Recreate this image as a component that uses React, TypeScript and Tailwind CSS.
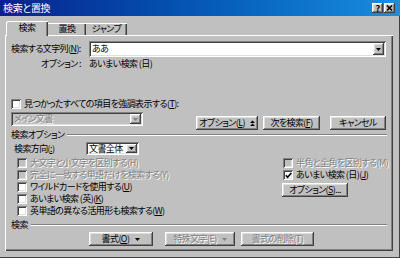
import React from "react";

const raised =
  "bg-[#c0c0c0] shadow-[inset_-1px_-1px_#404040,inset_1px_1px_#ffffff,inset_-2px_-2px_#808080,inset_2px_2px_#dfdfdf]";
const sunken =
  "shadow-[inset_1px_1px_#808080,inset_-1px_-1px_#ffffff,inset_2px_2px_#404040,inset_-2px_-2px_#dfdfdf]";
const dim = "text-[#808080] [text-shadow:1px_1px_0_#ffffff]";

function U({ children }: { children: React.ReactNode }) {
  return <span className="underline underline-offset-1">{children}</span>;
}

function Arrow({ disabled = false }: { disabled?: boolean }) {
  return (
    <div className={`w-[11px] h-full flex items-center justify-center shrink-0 ${raised}`}>
      <svg width="5" height="3" viewBox="0 0 5 3">
        <path d="M0 0h5L2.5 3z" fill={disabled ? "#808080" : "#000"} />
      </svg>
    </div>
  );
}

function Btn({
  children,
  w,
  disabled = false,
  className = "",
}: {
  children: React.ReactNode;
  w: string;
  disabled?: boolean;
  className?: string;
}) {
  return (
    <div
      className={`${w} h-[14px] flex items-center justify-center shrink-0 ${raised} ${
        disabled ? dim : ""
      } ${className}`}
    >
      {children}
    </div>
  );
}

function Check({
  children,
  checked = false,
  disabled = false,
}: {
  children: React.ReactNode;
  checked?: boolean;
  disabled?: boolean;
}) {
  return (
    <div className="flex items-center h-[12px]">
      <div
        className={`w-[10px] h-[10px] mr-[3px] flex items-center justify-center shrink-0 ${
          disabled ? "bg-[#c0c0c0]" : "bg-white"
        } ${sunken}`}
      >
        {checked && (
          <svg width="7" height="7" viewBox="0 0 7 7">
            <path d="M0.8 3.2L2.6 5.2L6.3 1" stroke="#000" strokeWidth="1.6" fill="none" />
          </svg>
        )}
      </div>
      <span className={disabled ? dim : ""}>{children}</span>
    </div>
  );
}

function Etched() {
  return (
    <div className="flex-1 flex flex-col ml-[3px]">
      <div className="h-px bg-[#808080]" />
      <div className="h-px bg-white" />
    </div>
  );
}

export default function App() {
  return (
    <div className="w-[400px] h-[258px] bg-[#c0c0c0] flex flex-col overflow-hidden whitespace-nowrap text-[9px] leading-[10px] tracking-[-0.6px] text-black [font-family:'Noto_Sans_CJK_JP',sans-serif] [font-feature-settings:'palt'] shadow-[inset_0_-1px_#404040,inset_-1px_0_#404040]">
      {/* Title bar */}
      <div className="h-[16px] shrink-0 flex items-center justify-between pl-[3px] pr-[5px] bg-gradient-to-r from-[#0a1f8c] to-[#1a8ee0]">
        <span className="text-white text-[10px] tracking-[-0.3px]">検索と置換</span>
        <div className="flex gap-[1px]">
          <div className={`w-[11px] h-[10px] flex items-center justify-center text-[9px] font-bold leading-none ${raised}`}>
            ?
          </div>
          <div className={`w-[11px] h-[10px] flex items-center justify-center ${raised}`}>
            <svg width="7" height="6" viewBox="0 0 7 6">
              <path d="M1 0.5L6 5.5M6 0.5L1 5.5" stroke="#000" strokeWidth="1.5" />
            </svg>
          </div>
        </div>
      </div>

      {/* Tabs */}
      <div className="h-[14px] mt-[5px] ml-[6px] flex items-end">
        <div className="w-[42px] h-[15px] -mb-px relative z-10 bg-[#c0c0c0] rounded-tl-[2px] flex items-center justify-center pb-[2px] shadow-[inset_1px_1px_#ffffff,inset_-1px_0_#404040,inset_-2px_0_#808080]">
          検索
        </div>
        <div className="w-[38px] h-[12px] flex items-center justify-center shadow-[inset_0_1px_#ffffff,inset_-1px_0_#404040,inset_-2px_0_#808080]">
          置換
        </div>
        <div className="w-[41px] h-[12px] flex items-center justify-center shadow-[inset_0_1px_#ffffff,inset_-1px_0_#404040,inset_-2px_0_#808080]">
          ジャンプ
        </div>
      </div>

      {/* Panel */}
      <div className="ml-[5px] w-[388px] h-[216px] shrink-0 flex flex-col pl-[6px] pt-[6px] shadow-[inset_1px_1px_#ffffff,inset_-1px_-1px_#404040,inset_-2px_-2px_#808080]">
        <div className="flex items-center h-[16px]">
          <span className="w-[78px] shrink-0">
            検索する文字列(<U>N</U>):
          </span>
          <div className={`w-[297px] h-[16px] bg-white flex items-center justify-between p-[2px] ${sunken}`}>
            <span className="pl-[1px]">ああ</span>
            <Arrow />
          </div>
        </div>
        <div className="flex items-center h-[12px] mt-[1px] pl-[30px]">
          <span className="w-[48px] shrink-0">オプション :</span>
          <span>あいまい検索 (日)</span>
        </div>

        <div className="mt-[28px]">
          <Check>
            見つかったすべての項目を強調表示する(<U>T</U>):
          </Check>
        </div>

        <div className="flex items-start mt-[2px]">
          <div className={`w-[132px] h-[14px] shrink-0 flex items-center justify-between p-[2px] bg-[#c0c0c0] ${sunken}`}>
            <span className={`pl-[1px] ${dim}`}>メイン文書</span>
            <Arrow disabled />
          </div>
          <Btn w="w-[62px]" className="ml-[53px] mt-[4px]">
            オプション(<U>L</U>)
            <svg width="5" height="6" viewBox="0 0 5 6" className="ml-[5px]">
              <path d="M0 3L2.5 0.5L5 3zM0 6L2.5 3.5L5 6z" fill="#000" />
            </svg>
          </Btn>
          <Btn w="w-[57px]" className="ml-[5px] mt-[4px]">
            次を検索(<U>F</U>)
          </Btn>
          <Btn w="w-[56px]" className="ml-[10px] mt-[4px]">
            キャンセル
          </Btn>
        </div>

        <div className="flex items-center h-[10px] pr-[6px]">
          <span>検索オプション</span>
          <Etched />
        </div>

        <div className="flex items-center h-[13px] mt-[2px] pl-[3px]">
          <span className="w-[72px] shrink-0">
            検索方向(<U>:</U>)
          </span>
          <div className={`w-[53px] h-[13px] shrink-0 bg-white flex items-center justify-between p-[2px] ${sunken}`}>
            <span className="pl-[1px]">文書全体</span>
            <Arrow />
          </div>
        </div>

        <div className="flex mt-[2px]">
          <div className="w-[272px] shrink-0 pl-[6px] flex flex-col">
            <Check disabled>大文字と小文字を区別する(H)</Check>
            <Check disabled>完全に一致する単語だけを検索する(Y)</Check>
            <Check>
              ワイルドカードを使用する(<U>U</U>)
            </Check>
            <Check>
              あいまい検索 (英)(<U>K</U>)
            </Check>
            <Check>
              英単語の異なる活用形も検索する(<U>W</U>)
            </Check>
          </div>
          <div className="flex flex-col">
            <Check disabled>半角と全角を区別する(M)</Check>
            <Check checked>
              あいまい検索 (日)(<U>J</U>)
            </Check>
            <Btn w="w-[66px]" className="mt-[2px] -ml-px">
              オプション(<U>S</U>)...
            </Btn>
          </div>
        </div>

        <div className="flex items-center h-[12px] mt-[2px] pr-[6px]">
          <span>検索</span>
          <Etched />
        </div>

        <div className="flex items-center mt-px">
          <Btn w="w-[64px]" className="ml-[78px]">
            書式(<U>O</U>)
            <svg width="5" height="3" viewBox="0 0 5 3" className="ml-[6px]">
              <path d="M0 0h5L2.5 3z" fill="#000" />
            </svg>
          </Btn>
          <Btn w="w-[70px]" className="ml-[12px]" disabled>
            特殊文字(E)
            <svg width="5" height="3" viewBox="0 0 5 3" className="ml-[5px]">
              <path d="M0 0h5L2.5 3z" fill="#808080" />
            </svg>
          </Btn>
          <Btn w="w-[73px]" className="ml-[6px]" disabled>
            書式の削除(T)
          </Btn>
        </div>
      </div>
    </div>
  );
}
